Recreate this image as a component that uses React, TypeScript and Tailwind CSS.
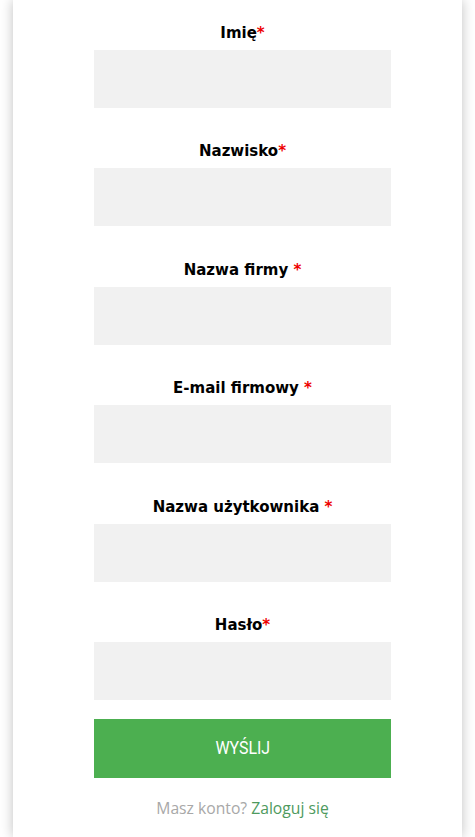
const fields = [
  { label: 'Imię', space: false },
  { label: 'Nazwisko', space: false },
  { label: 'Nazwa firmy', space: true },
  { label: 'E-mail firmowy', space: true },
  { label: 'Nazwa użytkownika', space: true },
  { label: 'Hasło', space: false },
]

export default function App() {
  return (
    <div className="min-h-screen bg-white">
      <div className="mx-[13px] bg-white shadow-[0_0_12px_rgba(0,0,0,0.25)] min-h-[837px] pt-[23px] pl-[81px]">
        <form className="w-[297px]">
          {fields.map((f, i) => (
            <div key={f.label} className={i === 0 ? '' : 'mt-[33.4px]'}>
              <label className="block h-[20px] leading-[20px] text-center text-[15px] font-bold text-black font-['DejaVu_Sans',sans-serif]">
                {f.label}
                {f.space ? ' ' : ''}
                <span className="text-[#e00]">*</span>
              </label>
              <input className="mt-[7px] block w-full h-[58px] bg-[#f1f1f1] outline-none" />
            </div>
          ))}
          <button
            type="button"
            className="mt-[19px] block w-full h-[59px] bg-[#4caf50] text-white text-[18.5px] font-['Roboto',sans-serif]"
          >
            <span className="inline-block scale-x-[0.86]">WYŚLIJ</span>
          </button>
          <p className="mt-[19px] text-center text-[15.7px] font-['Open_Sans',sans-serif] text-[#a8a8a8]">
            Masz konto? <a className="text-[#4e9a5e]">Zaloguj się</a>
          </p>
        </form>
      </div>
    </div>
  )
}
